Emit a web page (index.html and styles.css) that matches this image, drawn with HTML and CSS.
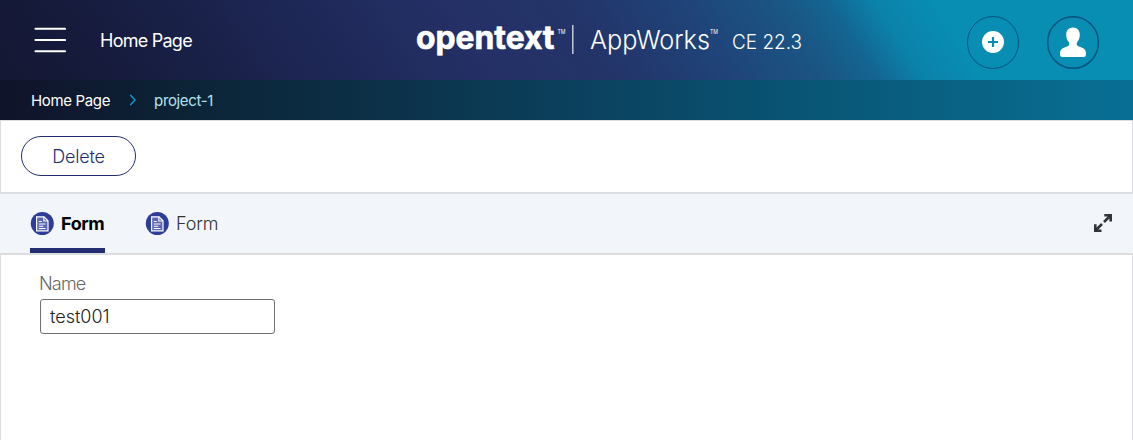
FILE: index.html
```html
<!DOCTYPE html>
<html lang="en">
<head>
<meta charset="utf-8">
<title>AppWorks</title>
<link rel="stylesheet" href="styles.css">
</head>
<body>
<header class="masthead">
  <svg class="menu" width="32" height="27" viewBox="0 0 32 27" stroke="#fff" stroke-width="2.1" stroke-linecap="round"><path d="M1.500 1.800H31M1.500 13H31M1.500 24.300H31"/></svg>
  <span class="page-title">Home Page</span>
  <svg class="brand" width="392" height="44" viewBox="0 0 392 44" fill="#fff">
    <text class="logo" x="0" y="28.800" textLength="138.500" lengthAdjust="spacingAndGlyphs">opentext</text>
    <text class="tm" x="141.500" y="14.200" textLength="8" lengthAdjust="spacingAndGlyphs">TM</text>
    <rect x="156.300" y="5" width="1.100" height="29"/>
    <text class="product" x="174" y="28.800" textLength="120" lengthAdjust="spacingAndGlyphs">AppWorks</text>
    <text class="tm" x="294" y="14.200" textLength="8" lengthAdjust="spacingAndGlyphs">TM</text>
    <text class="release" x="316" y="29" textLength="70" lengthAdjust="spacingAndGlyphs">CE 22.3</text>
  </svg>
  <div class="actions">
    <svg width="54" height="54" viewBox="0 0 54 54"><rect x="1.500" y=".5" width="51" height="52" rx="25.500" fill="none" stroke="#07547f"/><circle cx="27" cy="26" r="11" fill="#fff"/><path d="M27 21v10M22 26h10" stroke="#078db3" stroke-width="2.200"/></svg>
    <svg width="54" height="54" viewBox="0 0 54 54"><rect x="1.700" y=".7" width="50.600" height="51.600" rx="25.300" fill="none" stroke="#07547f" stroke-width="1.500"/><path fill="#fff" d="M27 11.500c4.200 0 6.800 2.900 6.800 7 0 3.500-1.200 6.300-3 8.200v2.400c.8 1.300 2.700 1.700 4.700 2.300 3.500 1 4.500 3.200 4.500 6.700 0 2-.8 3-2.500 3h-21c-1.700 0-2.500-1-2.500-3 0-3.500 1-5.700 4.500-6.700 2-.6 3.900-1 4.700-2.300v-2.400c-1.800-1.900-3-4.700-3-8.200 0-4.100 2.600-7 6.800-7z"/></svg>
  </div>
</header>
<nav class="crumbs">
  <span>Home Page</span>
  <svg width="8" height="14" viewBox="0 0 8 14" fill="none" stroke="#0d9ccc" stroke-width="1.400"><path d="M1.300 1 6 6 1.300 11"/></svg>
  <span class="current">project-1</span>
</nav>
<main>
  <div class="toolbar"><button class="delete"><span>Delete</span></button></div>
  <div class="tabs">
    <div class="tab active">
      <svg width="24" height="24" viewBox="0 0 24 24" fill="none"><circle cx="12.300" cy="11.500" r="11.500" fill="#2e3d98"/><path d="M6.600 4.800H14L18 8.800v10H6.600z" fill="#5967b0" stroke="#fff" stroke-width="1.200"/><path d="M13.800 4.800V9H18M8.800 9.500h3M8.800 12h6.700M8.800 14.200h4.500M8.800 16.500h6.700" stroke="#fff" stroke-width="1.100"/></svg>
      <span>Form</span>
    </div>
    <div class="tab">
      <svg width="24" height="24" viewBox="0 0 24 24" fill="none"><circle cx="12.300" cy="11.500" r="11.500" fill="#2e3d98"/><path d="M6.600 4.800H14L18 8.800v10H6.600z" fill="#5967b0" stroke="#fff" stroke-width="1.200"/><path d="M13.800 4.800V9H18M8.800 9.500h3M8.800 12h6.700M8.800 14.200h4.500M8.800 16.500h6.700" stroke="#fff" stroke-width="1.100"/></svg>
      <span>Form</span>
    </div>
    <svg class="expand" width="18" height="18" viewBox="0 0 18 18" fill="none" stroke="#303538" stroke-width="2.600"><path d="M10.300 1.300H16.700V7.500M16.500 1.500 10 8M1.300 10.300V16.700H7.500M1.500 16.500 8 10"/></svg>
  </div>
  <section class="form">
    <label for="name">Name</label>
    <input id="name" value="test001">
  </section>
</main>
</body>
</html>
```
FILE: styles.css
```css
* { box-sizing: border-box; }
body { margin: 0; height: 440px; display: flex; flex-direction: column; background: #fff; font-family: Inter, Roboto, "Liberation Sans", sans-serif; }
.masthead { height: 80px; padding: 0 33px; display: flex; color: #fff; background: linear-gradient(57deg, #141733 0%, #171d40 13%, #1e2857 29%, #243066 42%, #233469 52%, #1f4479 62%, #1a5684 70%, #146491 74%, #0b82aa 78%, #088db3 83%, #088db3 100%); }
.menu { margin: 27px 0 0 1px; }
.page-title { width: 92px; margin: 29px 0 0 34px; font-size: 18px; line-height: 24px; letter-spacing: -.75px; white-space: nowrap; }
.brand { margin: 20px 0 0 224px; overflow: visible; }
.logo { font: 700 32px Inter, sans-serif; stroke: #fff; stroke-width: .7px; }
.tm { font: 400 6px Inter, sans-serif; }
.product { font: 300 26px Inter, sans-serif; }
.release { font: 300 19.5px Inter, sans-serif; }
.actions { display: flex; gap: 26px; margin: 16px 0 0 auto; }
.crumbs { height: 40px; display: flex; align-items: center; padding: 1px 31px 0; font-size: 15px; letter-spacing: -.35px; color: #fff; background: linear-gradient(90deg, #10132a 0%, #0c2437 17%, #0c3047 33%, #0b4360 53%, #095474 70%, #096182 83%, #086f94 100%); }
.crumbs svg { margin: 0 17px 0 19px; }
.current { color: #b5e4ef; }
main { flex: 1; display: flex; flex-direction: column; }
.toolbar { height: 72px; padding: 15px 20px; border: 1px solid #dcdde0; border-bottom: 0; }
.delete { width: 115px; height: 40px; padding: 1px 0 0; border: 1px solid #232d72; border-radius: 20px; background: #fff; color: #232d72; font: 300 18px Inter, sans-serif; letter-spacing: -.2px; }
.tabs { height: 63px; padding: 0 21px 0 30px; display: flex; background: #f2f6fb; border: solid #dcdde0; border-width: 2px 0; }
.tab { height: 59px; margin-right: 40px; padding-top: 5px; display: flex; align-items: center; gap: 7px; border-bottom: 5px solid transparent; font-size: 18px; font-weight: 300; letter-spacing: -.15px; color: #333; }
.active { width: 75px; border-color: #232d72; font-weight: 700; letter-spacing: -.4px; color: #000; }
.tab svg { flex: none; }
.expand { margin: 20px 0 0 auto; }
.form { flex: 1; display: flex; flex-direction: column; padding: 18px 38px; border: solid #dcdde0; border-width: 0 1px; }
label { font-size: 18px; line-height: 22px; font-weight: 300; letter-spacing: -.8px; color: #666; }
#name { width: 235px; height: 35px; margin: 4px 0 0 1px; padding: 0 9px; border: 1px solid #707070; border-radius: 3px; font: 300 18px Inter, sans-serif; color: #222; }
```
